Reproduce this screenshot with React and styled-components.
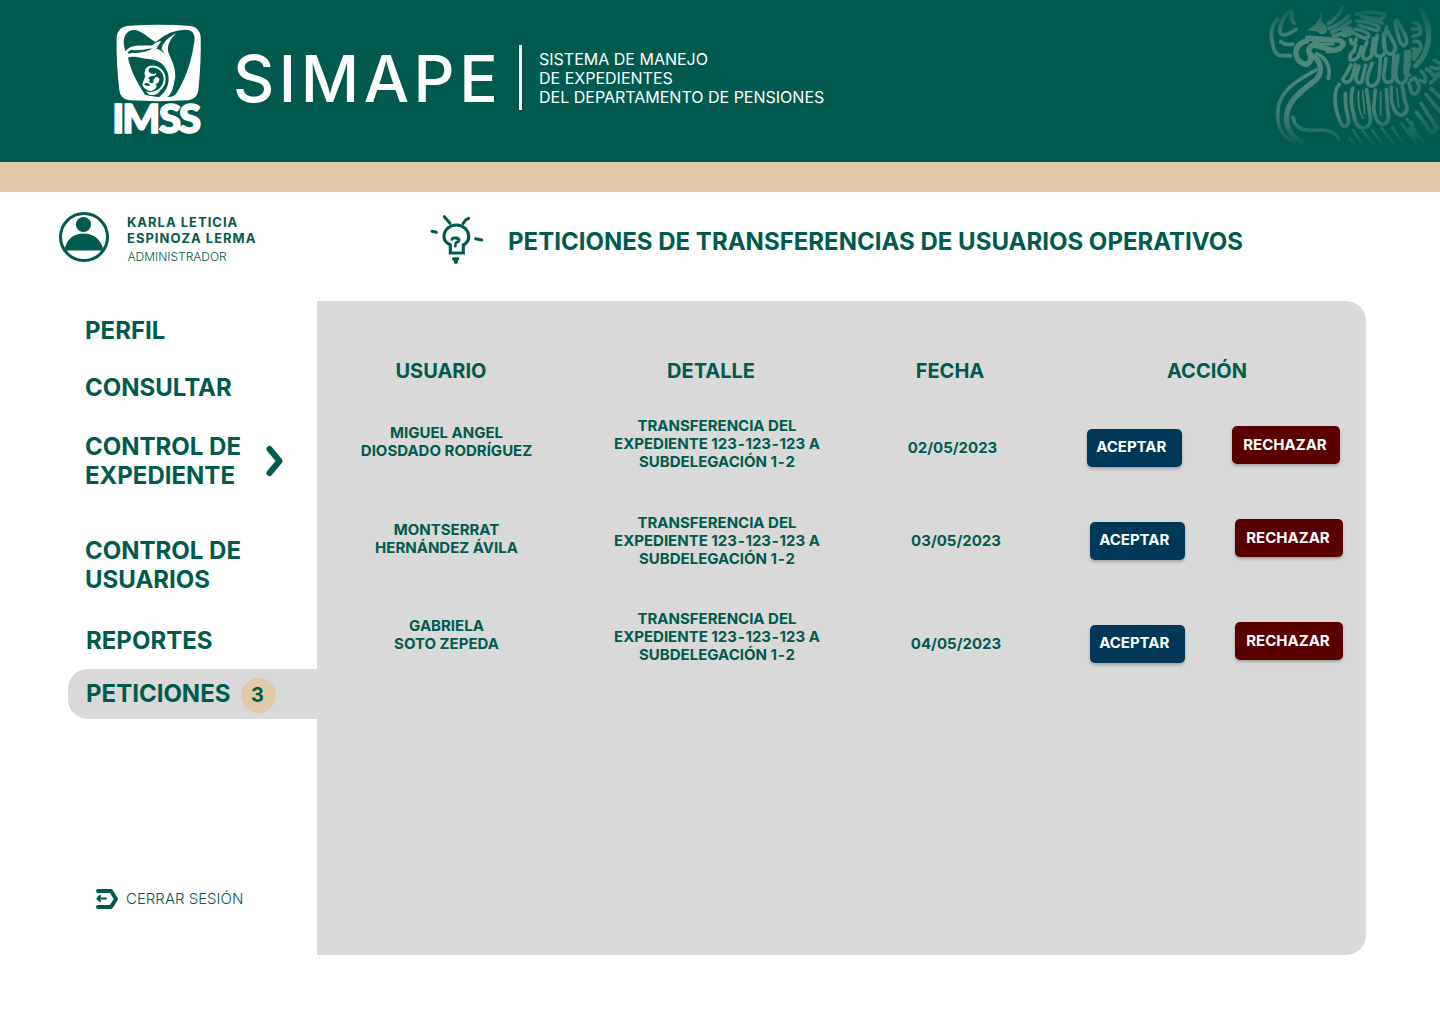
import React from 'react';
import styled, { createGlobalStyle } from 'styled-components';

const GREEN = '#005b4e';
const GREY = '#d9d9d9';
const SAND = '#e1caa8';

const GlobalStyle = createGlobalStyle`
  * { box-sizing: border-box; }
  body {
    margin: 0;
    background: #fff;
    color: ${GREEN};
    font-family: Inter, "Liberation Sans", sans-serif;
  }
`;

const Page = styled.div`
  width: 1440px;
  height: 1024px;
  overflow: hidden;
`;

const Header = styled.header`
  display: flex;
  align-items: flex-start;
  height: 192px;
  background: ${GREEN};
  border-bottom: 30px solid ${SAND};
  color: #fff;
`;

const Logo = styled.svg`
  flex: none;
  width: 110px;
  height: 130px;
  margin: 15px 0 0 105px;
`;

const Brand = styled.div`
  width: 284px;
  margin: 40px 0 0 18px;
  font-size: 64px;
  line-height: 77px;
  font-weight: 500;
  letter-spacing: 4.5px;
  white-space: nowrap;
`;

const Divider = styled.div`
  width: 3px;
  height: 65px;
  margin: 45px 0 0 2px;
  background: #fff;
  box-shadow: 0 4px 4px rgba(0, 0, 0, 0.25);
`;

const Tagline = styled.p`
  margin: 50px 0 0 17px;
  font-size: 16px;
  line-height: 19px;
  white-space: nowrap;
`;

const Emblem = styled.svg`
  flex: none;
  width: 180px;
  height: 162px;
  margin-left: auto;
`;

const Intro = styled.section`
  display: flex;
  align-items: flex-start;
  height: 109px;
  padding-left: 58px;
`;

const Avatar = styled.svg`
  flex: none;
  width: 52px;
  height: 52px;
  margin-top: 19px;
`;

const Person = styled.div`
  width: 302px;
  margin: 22px 0 0 17px;
  font-size: 13px;
  line-height: 16px;
`;

const Name = styled.div`
  font-weight: 700;
  letter-spacing: 1px;
`;

const Role = styled.div`
  margin-top: 3px;
  padding-left: 0.5px;
  font-size: 12px;
  line-height: 15px;
  font-weight: 350;
`;

const Bulb = styled.svg`
  flex: none;
  width: 75px;
  height: 70px;
  margin: 13px 0 0 -9px;
`;

const Title = styled.h1`
  margin: 35px 0 0 13px;
  font-size: 24px;
  line-height: 29px;
  font-weight: 700;
  letter-spacing: 0.01px;
  white-space: nowrap;
`;

const Main = styled.main`
  display: flex;
  height: 654px;
  padding-left: 68px;
`;

const Sidebar = styled.nav`
  display: flex;
  flex-direction: column;
  width: 249px;
`;

const NavItem = styled.a`
  display: flex;
  align-items: center;
  flex: none;
  margin-top: ${(p) => p.$gap}px;
  height: ${(p) => p.$height || 29}px;
  padding-left: ${(p) => p.$indent || 17}px;
  background: ${(p) => (p.$active ? GREY : 'transparent')};
  border-radius: 20px 0 0 20px;
  font-size: 24px;
  line-height: 29px;
  font-weight: 700;
`;

const NavLabel = styled.span`
  padding-bottom: ${(p) => (p.$raised ? 2 : 0)}px;
  white-space: pre-line;
`;

const Chevron = styled.svg`
  width: 20px;
  height: 34px;
  margin-left: 24px;
`;

const Count = styled.span`
  display: flex;
  align-items: center;
  justify-content: center;
  width: 35px;
  height: 35px;
  margin: 3px 0 0 11px;
  padding-right: 3px;
  border-radius: 50%;
  background: ${SAND};
  font-size: 20px;
`;

const Logout = styled.a`
  display: flex;
  align-items: center;
  gap: 7px;
  margin: auto 0 45px 27px;
  font-size: 15px;
  line-height: 22px;
  font-weight: 350;
`;

const LogoutIcon = styled.svg`
  width: 24px;
  height: 22px;
`;

const Panel = styled.section`
  width: 1049px;
  height: 654px;
  padding-top: 58px;
  background: ${GREY};
  border-radius: 0 20px 20px 0;
`;

const Row = styled.div`
  display: grid;
  grid-template-columns: 258px 272px 206px 313px;
  align-items: start;
  height: ${(p) => p.$height}px;
  text-align: center;
`;

const Heading = styled.h2`
  margin: 0;
  padding-right: ${(p) => p.$inset || 0}px;
  font-size: 20px;
  line-height: 24px;
  font-weight: 700;
`;

const Cell = styled.div`
  padding-top: ${(p) => p.$top}px;
  padding-left: ${(p) => p.$shift || 0}px;
  font-size: 15px;
  line-height: 18px;
  font-weight: 700;
  white-space: pre-line;
`;

const Hyphen = styled.span`
  padding: 0 0.75px;
`;

const Actions = styled.div`
  display: flex;
  align-items: flex-start;
  gap: 50px;
  padding: ${(p) => p.$top}px 0 0 ${(p) => p.$shift}px;
`;

const Button = styled.button`
  width: ${(p) => (p.$reject ? 108 : 95)}px;
  height: 38px;
  margin-top: ${(p) => (p.$reject ? 0 : 3)}px;
  padding: ${(p) => (p.$reject ? '0 2px 0 0' : '0 6.5px 2px 0')};
  border: 0;
  border-radius: 5px;
  background: ${(p) => (p.$reject ? '#5a0000' : '#003859')};
  box-shadow: 0 2px 3px rgba(0, 0, 0, 0.25);
  color: #fff;
  font: 700 15px/18px Inter, "Liberation Sans", sans-serif;
`;

const navItems = [
  { label: 'PERFIL', gap: 15 },
  { label: 'CONSULTAR', gap: 28 },
  { label: 'CONTROL DE\nEXPEDIENTE', gap: 30, height: 58, chevron: true },
  { label: 'CONTROL DE\nUSUARIOS', gap: 46, height: 58 },
  { label: 'REPORTES', gap: 32, indent: 18 },
  { label: 'PETICIONES', gap: 14, height: 50, indent: 18, active: true, count: 3 },
];

const requests = [
  { user: 'MIGUEL ANGEL\nDIOSDADO RODRÍGUEZ', date: '02/05/2023', height: 97, dateTop: 22, shift: 34, actionTop: 9, dateShift: 5 },
  { user: 'MONTSERRAT\nHERNÁNDEZ ÁVILA', date: '03/05/2023', height: 96, dateTop: 18, shift: 37, actionTop: 5, dateShift: 12 },
  { user: 'GABRIELA\nSOTO ZEPEDA', date: '04/05/2023', height: 96, dateTop: 25, shift: 37, actionTop: 12, dateShift: 12 },
];

function Detail() {
  return (
    <>
      TRANSFERENCIA DEL<br />
      EXPEDIENTE 123<Hyphen>-</Hyphen>123<Hyphen>-</Hyphen>123 A<br />
      SUBDELEGACIÓN 1<Hyphen>-</Hyphen>2
    </>
  );
}

function ImssLogo() {
  return (
    <Logo viewBox="0 0 330 390">
      <path fill="#fff" d="M66 33Q160 26 258 33Q284 37 287 66Q289 140 280 226Q277 252 250 256Q160 261 72 256Q46 252 43 226Q33 140 35 66Q38 37 66 33Z" />
      <path fill={GREEN} d="M60 104C51 77 58 50 82 45C109 43 126 67 152 81C180 58 204 46 238 44C266 43 274 59 266 92C258 145 239 196 213 237Q207 244 199 245C176 247 142 246 120 239C95 202 76 162 69 128Z" />
      <path fill="#fff" d="M53 123C60 106 72 94 93 92C112 90 132 93 143 91Q152 80 169 79Q159 91 154 101C182 108 207 146 208 188C208 216 199 239 185 247L163 246C184 230 194 207 190 181C184 148 160 134 130 132C108 131 94 122 76 126Q66 130 60 126Z" />
      <path fill={GREEN} d="M68 112L79 104Q98 109 141 100Q132 109 109 112Q93 116 82 113L72 116Z" />
      <path fill="#fff" d="M213 55C190 68 171 85 170 102C183 123 204 149 209 201C216 166 202 140 190 112C185 90 196 74 213 55Z" />
      <path fill="none" stroke="#fff" strokeWidth="6" d="M123 165C134 147 163 154 174 173C187 199 174 229 137 234" />
      <path fill="#fff" d="M123 162Q115 173 121 184L112 207Q112 216 122 222Q132 232 146 225Q161 215 151 207Q163 206 163 192Q160 183 151 187Q144 194 145 203Q133 208 133 199Q137 191 128 190Q135 181 148 182Q155 180 154 174Q142 181 132 171Q128 166 134 160Z" />
      <path fill={GREEN} d="M119 205Q130 202 136 211Q129 216 119 210Z" />
      <path fill="#fff" d="M122 228Q144 239 166 227Q155 243 133 239Z" />
      <text x="22 52 162 222" y="355" fill="#fff" stroke="#fff" strokeWidth="5" fontFamily="Lato, sans-serif" fontWeight="900" fontSize="120">IMSS</text>
    </Logo>
  );
}

function EagleEmblem() {
  return (
    <Emblem viewBox="0 0 540 486">
      <defs>
        <linearGradient id="fade" x1="0" y1="0" x2="0" y2="486" gradientUnits="userSpaceOnUse">
          <stop offset="0" stopColor="#fff" stopOpacity="0" />
          <stop offset="0.25" stopColor="#fff" stopOpacity="0.9" />
          <stop offset="0.7" stopColor="#fff" stopOpacity="0.8" />
          <stop offset="0.92" stopColor="#fff" stopOpacity="0" />
        </linearGradient>
        <linearGradient id="side" x1="0" y1="0" x2="1" y2="0">
          <stop offset="0" stopColor={GREEN} stopOpacity="0.3" />
          <stop offset="0.25" stopColor={GREEN} stopOpacity="0" />
          <stop offset="0.65" stopColor={GREEN} stopOpacity="0.1" />
          <stop offset="1" stopColor={GREEN} stopOpacity="0.5" />
        </linearGradient>
        <mask id="eagleMask" maskUnits="userSpaceOnUse" x="0" y="0" width="540" height="486">
          <rect width="540" height="486" fill="url(#fade)" />
        </mask>
      </defs>
      <g mask="url(#eagleMask)" fill="none" stroke="#5b8f83" strokeWidth="11" strokeLinecap="round" strokeLinejoin="round">
        <path strokeWidth="12" d="M53 58C34 75 31 103 37 127Q42 161 57 166L91 167" />
        <path d="M94 32C70 45 58 75 60 98Q68 110 86 101L109 88M62 126Q77 137 98 132M96 40Q92 60 103 70" />
        <path fill="#5b8f83" strokeWidth="3" d="M146 89Q166 79 180 54L184 38Q179 68 192 73Q207 84 196 99Q180 107 174 94Z" />
        <path strokeWidth="16" d="M140 123Q105 132 108 164Q112 188 139 194Q158 184 150 163Q139 143 162 134Q188 143 210 149Q239 156 250 132Q246 117 216 120L143 114" />
        <path strokeWidth="9" d="M155 119Q171 132 193 133L219 132M202 156Q234 152 246 140" />
        <path strokeWidth="16" d="M152 164C181 175 190 211 171 236C136 267 85 294 80 347C75 385 98 414 127 427" />
        <path d="M170 161C201 175 213 205 205 235M168 210C129 232 76 258 57 310C45 365 60 407 101 427" />
        <path d="M99 353C108 400 151 391 191 390Q225 394 236 417" />
        <path d="M205 71C226 58 240 43 247 22M208 85Q238 76 267 47M215 96Q245 85 271 64M220 107Q257 100 272 87Q266 81 247 88M250 106Q278 107 274 91" />
        <path d="M290 43Q325 30 374 42Q374 54 360 58L306 50M291 63Q333 66 356 80Q360 91 348 91L297 76M285 87Q324 93 326 107Q322 119 307 112L280 98M318 57Q350 60 366 69M272 119Q274 137 284 128L289 117" />
        <path d="M287 132L283 154Q268 157 270 179Q291 184 297 164L304 141M321 125L309 158Q304 180 322 177Q337 174 336 152L341 115M352 105L344 151Q345 172 362 169Q380 163 375 140L370 102M380 80L370 126Q374 163 394 162Q414 151 401 127L383 94M404 65L417 115Q428 151 440 127Q441 109 419 75L411 59" />
        <path d="M273 195L256 227Q241 240 258 247Q275 248 281 215L286 194M297 198L288 230Q289 255 305 246L317 196M336 190L324 225Q315 257 337 258Q356 255 358 224L361 178M378 175L371 225Q370 250 389 247Q403 242 399 219L402 166M414 165L407 221Q409 252 427 250Q448 237 435 216L438 155M448 154L447 196Q436 220 449 226" />
        <path d="M238 253C215 279 226 337 246 376Q264 386 266 360L257 320L256 281M278 265Q268 299 281 343Q289 388 312 384Q337 376 330 346L320 269M346 270L341 324Q348 376 372 373Q392 365 383 333L379 269M394 261L394 299Q404 350 428 345Q450 331 435 304L427 258M447 250L455 278Q474 290 478 259L466 234L452 240" />
        <path strokeWidth="5" d="M296 274Q291 324 309 355M308 272L314 341M362 276L362 346M410 264L416 322" />
        <path strokeWidth="16" d="M484 31C520 88 511 154 468 197" />
        <path d="M462 68Q485 68 480 103L459 109M458 87L471 87M462 124Q485 120 482 147L462 177Q455 158 474 149L459 147" />
        <path d="M500 207Q512 213 522 229L539 219M483 214Q500 226 495 247L481 241M513 201Q530 210 539 203M523 180L539 190M512 249L537 226M455 368Q461 406 490 425M469 337Q488 360 514 399M483 310L518 365Q533 385 520 397M498 283L539 333M513 265L539 291M449 385L464 415M490 321L533 385" />
        <path strokeWidth="8" d="M268 414L282 431M279 391L306 430M307 391L338 430M337 391L366 430M365 385L401 430M396 382L429 429M425 371L468 430M441 356L489 429" />
      </g>
      <rect width="540" height="486" fill="url(#side)" />
    </Emblem>
  );
}

export default function App() {
  return (
    <Page>
      <GlobalStyle />
      <Header>
        <ImssLogo />
        <Brand>SIMAPE</Brand>
        <Divider />
        <Tagline>
          SISTEMA DE MANEJO<br />DE EXPEDIENTES<br />DEL DEPARTAMENTO DE PENSIONES
        </Tagline>
        <EagleEmblem />
      </Header>
      <Intro>
        <Avatar viewBox="0 0 52 52">
          <circle cx="26" cy="26" r="23.5" fill="none" stroke={GREEN} strokeWidth="3" />
          <circle cx="25.5" cy="13.5" r="7.6" fill={GREEN} />
          <path fill={GREEN} d="M6.5 39.5C8 29 15 22.5 25.5 22.5S43.500 29 45.500 39.500Z" />
        </Avatar>
        <Person>
          <Name>KARLA LETICIA<br />ESPINOZA LERMA</Name>
          <Role>ADMINISTRADOR</Role>
        </Person>
        <Bulb viewBox="0 0 225 210" fill="none" stroke={GREEN} strokeWidth="9.5" strokeLinecap="round">
          <path d="M91 144V120C78 113 72 105 72 96C72 75 88 60 109 60S146 75 146 96C146 105 141 114 130 120V144Z" />
          <path strokeWidth="9" d="M73 35L90 55M129 56L138 44L146 40M36 79L49 82M167 101L185 105" />
          <path strokeWidth="9" d="M96 103C98 96 119 98 117 106C115 113 107 110 107 116M106 123V122" />
          <path strokeWidth="10" d="M101 162H113M106 171H109" />
        </Bulb>
        <Title>PETICIONES DE TRANSFERENCIAS DE USUARIOS OPERATIVOS</Title>
      </Intro>
      <Main>
        <Sidebar>
          {navItems.map((item) => (
            <NavItem key={item.label} $gap={item.gap} $height={item.height} $indent={item.indent} $active={item.active}>
              <NavLabel $raised={item.active}>{item.label}</NavLabel>
              {item.chevron && (
                <Chevron viewBox="0 0 20 34" fill="none" stroke={GREEN} strokeWidth="6" strokeLinecap="round" strokeLinejoin="round">
                  <path d="M4.500 5L14.500 17L4.500 29" />
                </Chevron>
              )}
              {item.count && <Count>{item.count}</Count>}
            </NavItem>
          ))}
          <Logout>
            <LogoutIcon viewBox="0 0 24 22" fill="none" stroke={GREEN} strokeLinejoin="round" strokeLinecap="round">
              <path strokeWidth="4" d="M3 3H16L21 11L16 19H3" />
              <path strokeWidth="2.2" d="M11 10.500H3M5 8L2.500 10.500L5 13" />
            </LogoutIcon>
            CERRAR SESIÓN
          </Logout>
        </Sidebar>
        <Panel>
          <Row $height={58}>
            <Heading $inset={10}>USUARIO</Heading>
            <Heading>DETALLE</Heading>
            <Heading>FECHA</Heading>
            <Heading $inset={5}>ACCIÓN</Heading>
          </Row>
          {requests.map((r) => (
            <Row key={r.date} $height={r.height}>
              <Cell $top={7} $shift={1}>{r.user}</Cell>
              <Cell $top={0} $shift={12}><Detail /></Cell>
              <Cell $top={r.dateTop} $shift={r.dateShift}>{r.date}</Cell>
              <Actions $top={r.actionTop} $shift={r.shift}>
                <Button>ACEPTAR</Button>
                <Button $reject>RECHAZAR</Button>
              </Actions>
            </Row>
          ))}
        </Panel>
      </Main>
    </Page>
  );
}
